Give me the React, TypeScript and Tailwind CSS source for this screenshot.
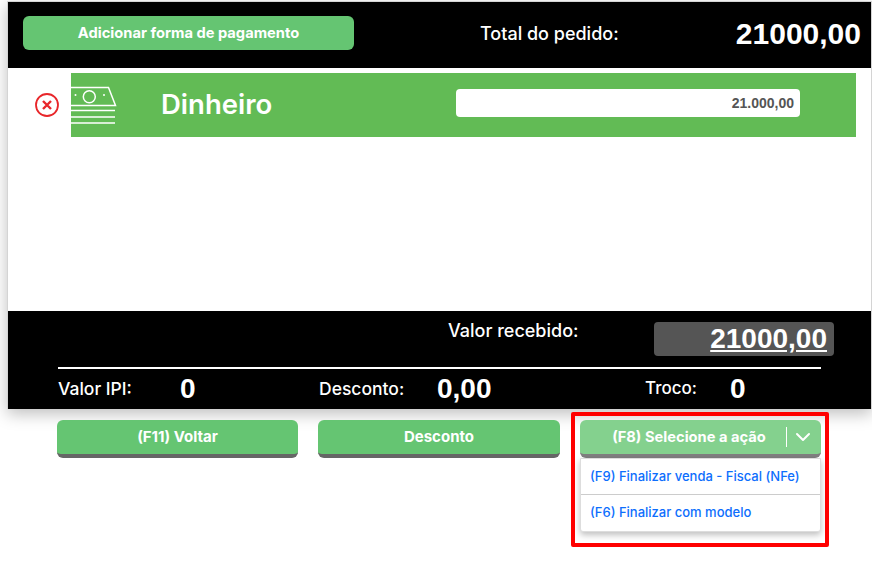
import { ChevronDown } from "lucide-react";

function MoneyIcon() {
  return (
    <svg width="46" height="40" viewBox="0 0 46 40" fill="none" stroke="white" strokeWidth="1.5" className="shrink-0">
      <path d="M0 2.5H37.5L44.5 20.5H0" />
      <circle cx="18.3" cy="11.7" r="6" />
      <circle cx="4.5" cy="10" r="1" fill="white" stroke="none" />
      <circle cx="33" cy="10" r="1" fill="white" stroke="none" />
      <path d="M0 25.5H44M0 32H44M0 38H44" />
    </svg>
  );
}

function RemoveIcon() {
  return (
    <svg width="24" height="24" viewBox="0 0 24 24" fill="none" stroke="#e8262a" strokeWidth="1.8">
      <circle cx="12" cy="12" r="11" />
      <path d="M8 8L16 16M16 8L8 16" strokeWidth="2.4" />
    </svg>
  );
}

function ActionButton({ label, wide }: { label: string; wide?: boolean }) {
  return (
    <button
      className={
        wide
          ? "h-[38px] w-[242px] shrink-0 rounded-[6px] border-b-4 border-[#666] bg-[#65c572] text-[15px] font-bold text-white"
          : "h-[38px] w-[241px] shrink-0 rounded-[6px] border-b-4 border-[#666] bg-[#65c572] text-[15px] font-bold text-white"
      }
    >
      {label}
    </button>
  );
}

export default function App() {
  return (
    <div className="relative h-[568px] w-[872px] bg-white font-[Inter,sans-serif]">
      {/* painel principal */}
      <div className="ml-[7px] mt-px flex w-[865px] flex-col border-x border-t border-[#d4d4d4] shadow-[0_5px_15px_rgba(0,0,0,0.25)]">
        <div className="flex h-[66px] items-center bg-black pb-[4px] pl-[15px] text-white">
          <button className="h-[34px] w-[331px] rounded-[6px] bg-[#65c572] text-[14.7px] font-bold">
            Adicionar forma de pagamento
          </button>
          <span className="ml-[126px] text-[18px] font-medium">Total do pedido:</span>
          <span className="ml-auto pr-[10px] font-['Liberation_Sans',sans-serif] text-[30px] font-bold">21000,00</span>
        </div>

        <div className="h-[243px] bg-white pt-[5px]">
          <div className="flex">
            <div className="flex w-[63px] items-center pl-[27px]">
              <RemoveIcon />
            </div>
            <div className="flex h-[64px] w-[785px] items-center bg-[#62bb55] text-white">
              <MoneyIcon />
              <span className="ml-[44px] w-[295px] text-[27.5px] font-semibold">Dinheiro</span>
              <div className="mb-[4px] flex h-[28px] w-[344px] items-center justify-end rounded-[4px] bg-white pr-[6px] font-['Liberation_Sans',sans-serif] text-[14px] font-bold text-[#555]">
                21.000,00
              </div>
            </div>
          </div>
        </div>

        <div className="h-[98px] bg-black pt-[11px] text-white">
          <div className="flex items-start pl-[440px]">
            <span className="w-[206px] text-[18px] font-medium leading-[18px]">Valor recebido:</span>
            <div className="flex h-[34px] w-[180px] items-center justify-end rounded-[4px] bg-[#555] pr-[7px] font-['Liberation_Sans',sans-serif] text-[28px] font-bold underline">
              21000,00
            </div>
          </div>
          <div className="ml-[50px] mt-[11px] h-[2px] w-[763px] bg-white" />
          <div className="ml-[50px] mt-[2px] flex h-[36px] items-center">
            <span className="w-[122px] text-[17.5px] font-medium">Valor IPI:</span>
            <span className="w-[139px] font-['Liberation_Sans',sans-serif] text-[28px] font-bold">0</span>
            <span className="w-[118px] text-[17.5px] font-medium">Desconto:</span>
            <span className="w-[208px] font-['Liberation_Sans',sans-serif] text-[28px] font-bold">0,00</span>
            <span className="w-[85px] text-[17px] font-medium">Troco:</span>
            <span className="font-['Liberation_Sans',sans-serif] text-[28px] font-bold">0</span>
          </div>
        </div>
      </div>

      {/* botoes */}
      <div className="ml-[57px] mt-[11px] flex gap-[20px]">
        <ActionButton label="(F11) Voltar" />
        <ActionButton label="Desconto" wide />
        <div className="relative w-[241px]">
          <div className="flex h-[38px] items-center rounded-[6px] border-b-4 border-[#807f80] bg-[#84d18e] text-[14.7px] font-bold text-white">
            <span className="w-[206px] pl-[12px] text-center">(F8) Selecione a ação</span>
            <span className="h-[20px] w-px bg-white" />
            <ChevronDown size={24} strokeWidth={2} className="ml-[4px]" />
          </div>
          <div className="absolute left-0 top-[38px] w-[241px] rounded-b-[3px] border border-[#ddd] bg-white text-[13px] font-medium text-[#0d6efd] shadow-[0_3px_6px_rgba(0,0,0,0.25)]">
            <div className="flex h-[36px] items-center border-b border-[#ccc] pl-[9px]">(F9) Finalizar venda - Fiscal (NFe)</div>
            <div className="flex h-[36px] items-center pl-[9px]">(F6) Finalizar com modelo</div>
          </div>
        </div>
      </div>

      {/* destaque vermelho */}
      <div className="pointer-events-none absolute left-[571px] top-[411px] h-[135px] w-[258px] rounded-[2px] border-4 border-[#ff0000]" />
    </div>
  );
}
